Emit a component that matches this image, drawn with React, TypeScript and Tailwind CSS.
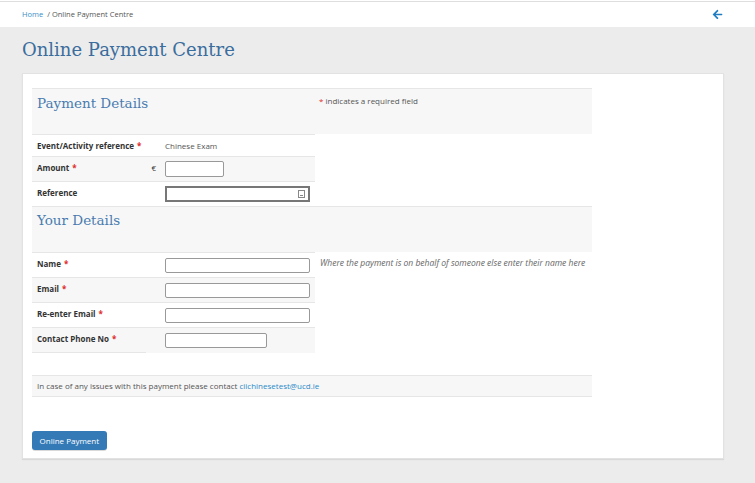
import React from "react";
import { FaArrowLeft } from "react-icons/fa";

const Req = () => <span className="ml-[3px] text-[#e02b2b]">*</span>;

function Row({
  label,
  required,
  euro,
  bg,
  h,
  children,
  help,
  shortBorder,
}: {
  label: string;
  required?: boolean;
  euro?: boolean;
  bg?: boolean;
  h: string;
  children?: React.ReactNode;
  help?: string;
  shortBorder?: boolean;
}) {
  return (
    <div className={`flex ${h}`}>
      <div
        className={`flex w-[283px] border-t border-[#e6e6e6] ${bg ? "bg-[#f7f7f7]" : "bg-white"}`}
      >
        <div
          className={`flex w-[114px] items-start pt-[5px] pl-[5px] leading-[11px] font-bold text-[#333] ${shortBorder ? "border-b border-[#e6e6e6]" : ""}`}
        >
          {label}
          {required && <Req />}
        </div>
        <div className="flex w-[14px] items-start justify-end pt-[5px] pr-[4px] leading-[11px] text-[#333]">
          {euro ? "€" : ""}
        </div>
        <div className="flex flex-1 items-center pl-[5px]">{children}</div>
      </div>
      {help && (
        <div className="flex items-start pt-[5px] pl-[5px] leading-[11px] text-[8.5px] italic text-[#666]">{help}</div>
      )}
    </div>
  );
}

export default function App() {
  return (
    <div
      className="min-h-[483px] w-[755px] bg-[#ececec] text-[8px] text-[#333]"
      style={{ fontFamily: '"Open Sans", "Noto Sans", sans-serif' }}
    >
      <div className="h-[2px] border-b border-[#dedede] bg-white" />
      <div className="flex h-[25px] items-center justify-between bg-white pl-[22px] pr-[32px] text-[7.5px]">
        <div className="text-[#555]">
          <span className="text-[#3a8fc8]">Home</span>
          <span className="ml-[4px]">/ Online Payment Centre</span>
        </div>
        <FaArrowLeft className="h-[11px] w-[11px] text-[#1f7cc0]" />
      </div>

      <div className="px-[22px] pb-[20px]">
        <h1
          className="pt-[10px] pb-[10px] text-[18px] leading-[26px] font-light text-[#3b6d9d]"
          style={{ fontFamily: '"DejaVu Serif", serif' }}
        >
          Online Payment Centre
        </h1>

        <div className="w-[702px] border border-[#e2e2e2] bg-white px-[9px] pt-[14px] pb-[8px] shadow-[0_1px_1px_rgba(0,0,0,0.08)]">
          <div className="w-[560px]">
            {/* Payment Details header */}
            <div className="flex h-[46px] border-t border-[#e6e6e6] bg-[#f7f7f7]">
              <div className="w-[283px]">
                <h2
                  className="pl-[5px] pt-[4px] text-[13.5px] leading-[20px] text-[#4a7cb0]"
                  style={{ fontFamily: '"DejaVu Serif", serif' }}
                >
                  Payment Details
                </h2>
              </div>
              <div className="pl-[4px] pt-[6px] text-[#555]">
                <span className="text-[#e02b2b]">*</span> indicates a required field
              </div>
            </div>

            <Row label="Event/Activity reference" required h="h-[22px]">
              <span className="text-[#555]">Chinese Exam</span>
            </Row>
            <Row label="Amount" required euro bg h="h-[25px]">
              <div className="h-[16px] w-[59px] rounded-[2px] border border-[#999] bg-white" />
            </Row>
            <Row label="Reference" h="h-[25px]">
              <div className="flex h-[16px] w-[145px] items-center justify-end border-2 border-[#777] bg-white pr-[3px]">
                <div className="flex h-[8px] w-[7px] items-end justify-center border border-[#888] pb-[1px]">
                  <div className="h-[1px] w-[3px] bg-[#888]" />
                </div>
              </div>
            </Row>

            {/* Your Details header */}
            <div className="flex h-[46px] border-t border-[#e6e6e6] bg-[#f7f7f7]">
              <h2
                className="pl-[5px] pt-[3px] text-[13.5px] leading-[20px] text-[#4a7cb0]"
                style={{ fontFamily: '"DejaVu Serif", serif' }}
              >
                Your Details
              </h2>
            </div>

            <Row
              label="Name"
              required
              h="h-[25px]"
              help="Where the payment is on behalf of someone else enter their name here"
            >
              <div className="h-[15px] w-[145px] rounded-[2px] border border-[#999] bg-white" />
            </Row>
            <Row label="Email" required bg h="h-[25px]">
              <div className="h-[15px] w-[145px] rounded-[2px] border border-[#999] bg-white" />
            </Row>
            <Row label="Re-enter Email" required h="h-[25px]">
              <div className="h-[15px] w-[145px] rounded-[2px] border border-[#999] bg-white" />
            </Row>
            <Row label="Contact Phone No" required bg h="h-[26px]" shortBorder>
              <div className="h-[15px] w-[102px] rounded-[2px] border border-[#999] bg-white" />
            </Row>

            <div className="mt-[22px] flex h-[22px] items-center border-t border-b border-[#e6e6e6] bg-[#f7f7f7] pl-[5px] text-[#555]">
              In case of any issues with this payment please contact&nbsp;
              <span className="text-[#2a8ac8]">ciichinesetest@ucd.ie</span>
            </div>
          </div>

          <button className="mt-[34px] h-[19px] rounded-[3px] bg-[#337ab7] px-[7.5px] text-[8px] text-white shadow-[0_1px_0_rgba(0,0,0,0.15)]">
            Online Payment
          </button>
        </div>
      </div>
    </div>
  );
}
